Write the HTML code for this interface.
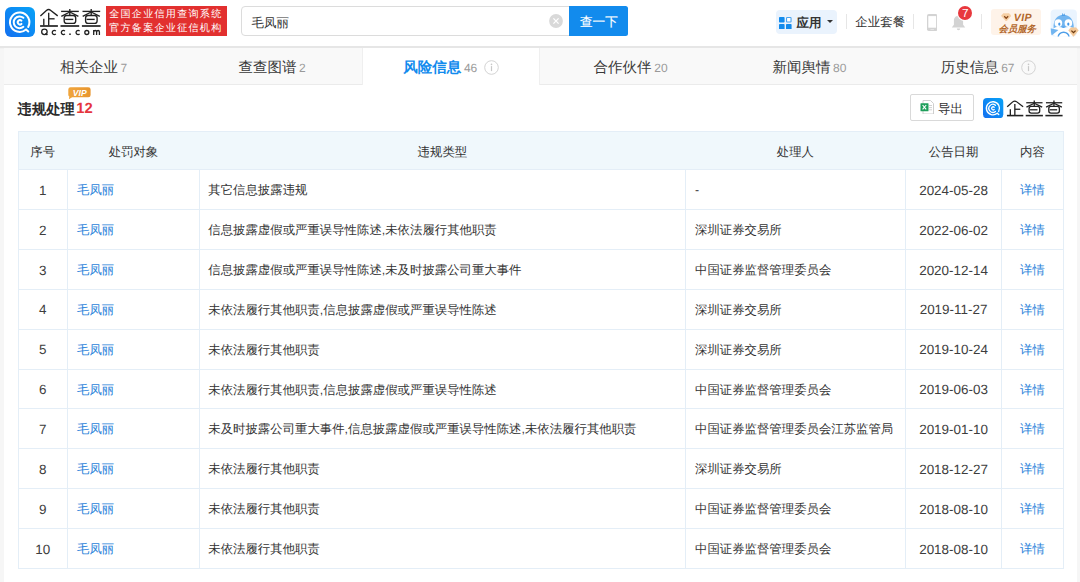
<!DOCTYPE html>
<html><head><meta charset="utf-8">
<style>
*{box-sizing:border-box;margin:0;padding:0}
html,body{text-rendering:geometricPrecision;width:1080px;height:582px;overflow:hidden;background:#f6f6f6;font-family:"Liberation Sans",sans-serif;color:#333}
div,span.ab,svg{position:absolute}
span{white-space:nowrap}
.t{white-space:nowrap;line-height:1}
.hl{height:1px;background:#e4eef7}
.vl{width:1px;background:#e4eef7}
.lk{color:#128bed}
</style></head><body>

<div style="left:0;top:0;width:1080px;height:46.5px;background:#fff"></div>
<div style="left:0;top:46.4px;width:1080px;height:1.2px;background:#e6e6e6"></div>
<div style="left:0;top:47.6px;width:1080px;height:1.5px;background:linear-gradient(#eeeeee,rgba(246,246,246,0))"></div>
<svg style="left:4.5px;top:6.8px" width="30" height="30" viewBox="0 0 30 30">
<defs><linearGradient id="lg" x1="0" y1="1" x2="1" y2="0"><stop offset="0" stop-color="#1470f0"/><stop offset="1" stop-color="#07a2f7"/></linearGradient></defs>
<rect width="30" height="30" rx="6" fill="url(#lg)"/>
<g fill="none" stroke="#fff" stroke-width="2" stroke-linecap="round" stroke-linejoin="round">
<path d="M23.18 19.90 A9.7 9.7 0 1 0 21.06 22.52 M21.06 22.52 L23.26 24.52"/>
<path d="M18.39 10.78 A5.9 5.9 0 1 0 18.39 19.82"/>
<path d="M16.47 13.67 A2.2 2.2 0 1 0 16.47 16.93"/>
</g></svg>
<svg style="left:38px;top:6px" width="66" height="32" viewBox="0 0 66 32">
<g fill="none" stroke="#222" stroke-width="1.35" stroke-linecap="butt" stroke-linejoin="round">
<path d="M2.4 9.9 L8.4 4.4 Q10.6 2.6 12.8 4.4 L19.7 9.9"/>
<path d="M10.7 6.7 V19.4"/><path d="M10.7 12.8 H16.6"/><path d="M5.8 12.8 V19.4"/>
<path d="M2.1 20 H19.9" stroke-width="1.7"/>
<g id="cha">
<path d="M23.1 5.4 H40.8"/><path d="M31.8 2.9 V9.5"/><path d="M31.8 6.0 L23.3 10.3"/><path d="M31.8 6.0 L40.4 10.3"/>
<rect x="26.2" y="9.5" width="11.5" height="7.8" rx="2.4"/><path d="M27.2 13.4 H35.3"/>
<path d="M22.5 20 H41.2" stroke-width="1.7"/>
</g>
<use href="#cha" x="21.4"/>
</g></svg>
<svg style="left:38px;top:26px" width="66" height="12" viewBox="38 26 66 12">
<g fill="none" stroke="#222" stroke-width="1.3">
<circle cx="44.4" cy="31.8" r="2.75"/>
<path d="M45.6 33.2 L47.4 35" stroke-width="1.5"/>
<path d="M55.8 31.1 A2.05 2.05 0 1 0 55.8 33.9"/>
<path d="M64.9 31.1 A2.05 2.05 0 1 0 64.9 33.9"/>
<path d="M79.6 31.1 A2.05 2.05 0 1 0 79.6 33.9"/>
<circle cx="86.8" cy="32.5" r="2.0"/>
<path d="M93.7 35.1 V30.0 M93.7 31.6 Q93.9 30.5 95.3 30.5 Q96.6 30.5 96.6 31.9 V35.1 M96.6 31.9 Q96.8 30.5 98.1 30.5 Q99.4 30.5 99.4 31.9 V35.1"/>
</g>
<circle cx="70" cy="34.2" r="0.85" fill="#222"/>
</svg>
<div style="left:105.6px;top:6.3px;width:121px;height:30.1px;background:#e2302f"></div>
<div class="t" style="left:109.2px;top:10.0px;font-size:10.1px;letter-spacing:1.24px;color:#fff">全国企业信用查询系统</div>
<div class="t" style="left:109.2px;top:23.9px;font-size:10.1px;letter-spacing:1.24px;color:#fff">官方备案企业征信机构</div>
<div style="left:240.6px;top:6.4px;width:340px;height:29.3px;border:1px solid #dcdcdc;border-radius:4px;background:#fff"></div>
<div class="t" style="left:251.5px;top:16.5px;font-size:12.5px;color:#333">毛凤丽</div>
<svg style="left:548.8px;top:13.9px" width="14" height="14" viewBox="0 0 14 14"><circle cx="7" cy="7" r="6.9" fill="#d9d9d9"/><path d="M4.4 4.4L9.6 9.6M9.6 4.4L4.4 9.6" stroke="#fff" stroke-width="1.3"/></svg>
<div style="left:569px;top:6.1px;width:59.3px;height:29.7px;background:#128bed;border-radius:0 2.5px 2.5px 0"></div>
<div class="t" style="left:580px;top:15.9px;font-size:12.6px;color:#fff;-webkit-text-stroke:0.2px #fff">查一下</div>
<div style="left:775.6px;top:9.6px;width:61px;height:24.2px;background:#eaf3fd;border-radius:4px"></div>
<svg style="left:779.3px;top:16.6px" width="12.6" height="12.6" viewBox="0 0 12.6 12.6">
<rect x="0" y="0" width="5.6" height="5.6" rx="0.8" fill="#128bed"/>
<rect x="7.55" y="0.55" width="4.5" height="4.5" rx="0.6" fill="#fff" stroke="#4aa3f0" stroke-width="1.1"/>
<rect x="0" y="7.0" width="5.6" height="5.6" rx="0.8" fill="#128bed"/>
<rect x="7.0" y="7.0" width="5.6" height="5.6" rx="0.8" fill="#128bed"/></svg>
<div class="t" style="left:796.4px;top:16.6px;font-size:12.5px;font-weight:bold;color:#333">应用</div>
<div style="left:826.9px;top:20.4px;width:0;height:0;border-left:3.1px solid transparent;border-right:3.1px solid transparent;border-top:3.4px solid #333"></div>
<div style="left:846.2px;top:14px;width:1px;height:15px;background:#e6e6e6"></div>
<div class="t" style="left:855.2px;top:16.4px;font-size:12.5px;color:#333">企业套餐</div>
<div style="left:913px;top:14px;width:1px;height:15px;background:#e6e6e6"></div>
<svg style="left:926.5px;top:13.7px" width="10.4" height="17" viewBox="0 0 10.4 17"><rect x="0" y="0" width="10.4" height="17" rx="1.8" fill="#d3d3d3"/><rect x="1.3" y="2.1" width="7.8" height="11.6" fill="#fff"/><rect x="3.4" y="14.9" width="3.6" height="0.9" rx="0.4" fill="#ececec"/></svg>
<svg style="left:950.5px;top:15.2px" width="15" height="16" viewBox="0 0 15 16"><path d="M7.5 0.8c-2.9 0-4.6 2.2-4.6 5v3.9L0.8 12.6h13.4l-2.1-2.9V5.8C12.1 3 10.4 0.8 7.5 0.8z" fill="#d3d3d3"/><path d="M5.8 13.6a1.7 1.6 0 0 0 3.4 0z" fill="#d3d3d3"/></svg>
<div style="left:957.9px;top:6.3px;width:14.2px;height:14.2px;border-radius:50%;background:#e8383d;box-shadow:0 0 0 1.2px #fff"></div>
<div class="t" style="left:961.9px;top:8.0px;font-size:11.8px;color:#fff">7</div>
<div style="left:981.3px;top:14px;width:1px;height:15px;background:#e6e6e6"></div>
<div style="left:990.7px;top:9.3px;width:50.6px;height:25.9px;background:#fef3e9;border-radius:3px"></div>
<svg style="left:1000.8px;top:12.5px" width="10.4" height="8.6" viewBox="0 0 10.4 8.6"><path d="M2.4 0.4H8L10.1 2.8L5.2 8.3L0.3 2.8z" fill="#f6cfa3" stroke="#f6cfa3" stroke-width="0.5" stroke-linejoin="round"/><path d="M3.2 3.3l2 2 2-2" stroke="#86461a" stroke-width="1.2" fill="none"/></svg>
<div class="t" style="left:1013.8px;top:12.8px;font-size:10.6px;font-weight:bold;font-style:italic;color:#b3682d;letter-spacing:0.4px">VIP</div>
<div class="t" style="left:998.6px;top:24.1px;font-size:9.4px;font-weight:bold;font-style:italic;color:#b3682d;letter-spacing:-0.1px">会员服务</div>
<svg style="left:1050px;top:8.5px" width="30" height="28" viewBox="1050 8.5 30 28">
<defs><clipPath id="avc"><rect x="1050.6" y="9" width="26.3" height="27" rx="4"/></clipPath></defs>
<rect x="1050.6" y="9" width="26.3" height="27" rx="4" fill="#eaf4fe"/>
<g clip-path="url(#avc)">
<ellipse cx="1063.5" cy="31" rx="10.5" ry="8.5" fill="#fff"/>
<path d="M1053.6 28 C1053.0 19 1057.5 14.2 1063.5 14.2 C1069.5 14.2 1074.2 19 1073.8 28 C1071 26 1067 26.2 1063.5 27.6 C1060 26.2 1056 26 1053.6 28 Z" fill="#72b5f0"/>
<path d="M1061.8 15.5 L1062.6 12.3 L1063.4 14.4 L1064.6 12.8 L1065 15.6z" fill="#4f9fe8"/>
<ellipse cx="1058.4" cy="22.6" rx="3.8" ry="3.9" fill="#fff"/>
<ellipse cx="1068.4" cy="22.6" rx="3.8" ry="3.9" fill="#fff"/>
<ellipse cx="1059.3" cy="23.6" rx="1.1" ry="1.65" fill="#3f97ea"/>
<ellipse cx="1068.3" cy="23.6" rx="1.1" ry="1.65" fill="#3f97ea"/>
<path d="M1062 25.9 H1064.9 A1.45 1.45 0 0 1 1062 25.9z" fill="#4f9fe8"/>
<path d="M1050.3 27.8 L1058.4 29.6 L1051.6 35 Z" fill="#72b5f0"/>
<path d="M1058.2 36.4 A5.4 4.6 0 0 1 1069 36.4" fill="none" stroke="#4f9fe8" stroke-width="1.4"/>
</g>
<path d="M1070.8 27.3H1076.2L1078.3 29.9L1073.5 35.9L1068.7 29.9z" fill="#f4c99a" stroke="#f4c99a" stroke-width="0.6" stroke-linejoin="round"/>
<path d="M1071.4 30.1l2.1 2.1 2.1-2.1" stroke="#6b3a10" stroke-width="1.3" fill="none"/>
</svg>
<div style="left:4px;top:47.6px;width:1073px;height:36.9px;background:#f9f9f9"></div>
<div style="left:4px;top:83.9px;width:1073px;height:1px;background:#ebebeb"></div>
<div class="t" style="left:60.00px;top:60.6px;font-size:14.5px;font-weight:normal;color:#393939">相关企业</div>
<div class="t" style="left:120.60px;top:62.2px;font-size:12px;color:#999">7</div>
<div class="t" style="left:238.60px;top:60.6px;font-size:14.5px;font-weight:normal;color:#393939">查查图谱</div>
<div class="t" style="left:299.00px;top:62.2px;font-size:12px;color:#999">2</div>
<div style="left:361.67px;top:47.6px;width:178.83px;height:37.9px;background:#fff;border-left:1px solid #efefef;border-right:1px solid #efefef"></div>
<div class="t" style="left:403.30px;top:60.6px;font-size:14.5px;font-weight:bold;color:#128bed">风险信息</div>
<div class="t" style="left:463.90px;top:62.2px;font-size:12px;color:#999">46</div>
<svg style="left:483.50px;top:60px" width="15" height="15" viewBox="0 0 15 15"><circle cx="7.5" cy="7.5" r="6.8" fill="none" stroke="#d3d3d3" stroke-width="1"/><circle cx="7.5" cy="4.4" r="0.8" fill="#c8c8c8"/><rect x="6.9" y="6.1" width="1.2" height="5" fill="#c8c8c8"/></svg>
<div class="t" style="left:593.50px;top:60.6px;font-size:14.5px;font-weight:normal;color:#393939">合作伙伴</div>
<div class="t" style="left:654.30px;top:62.2px;font-size:12px;color:#999">20</div>
<div class="t" style="left:772.60px;top:60.6px;font-size:14.5px;font-weight:normal;color:#393939">新闻舆情</div>
<div class="t" style="left:833.10px;top:62.2px;font-size:12px;color:#999">80</div>
<div class="t" style="left:940.70px;top:60.6px;font-size:14.5px;font-weight:normal;color:#393939">历史信息</div>
<div class="t" style="left:1001.20px;top:62.2px;font-size:12px;color:#999">67</div>
<svg style="left:1020.50px;top:60px" width="15" height="15" viewBox="0 0 15 15"><circle cx="7.5" cy="7.5" r="6.8" fill="none" stroke="#d3d3d3" stroke-width="1"/><circle cx="7.5" cy="4.4" r="0.8" fill="#c8c8c8"/><rect x="6.9" y="6.1" width="1.2" height="5" fill="#c8c8c8"/></svg>
<div style="left:4px;top:84.9px;width:1073px;height:500px;background:#fff"></div>
<div class="t" style="left:17.6px;top:103.0px;font-size:14.3px;font-weight:bold;color:#2b2b2b">违规处理</div>
<div class="t" style="left:76.2px;top:102.3px;font-size:14.8px;font-weight:bold;color:#e5353d">12</div>
<svg style="left:68px;top:86.8px" width="23" height="12.5" viewBox="0 0 23 12.5">
<defs><linearGradient id="vg" x1="0" y1="0" x2="1" y2="0"><stop offset="0" stop-color="#f0a53c"/><stop offset="1" stop-color="#e8952e"/></linearGradient></defs>
<path d="M2.5 0.3H20.3A2.3 2.3 0 0 1 22.6 2.6V8A2.3 2.3 0 0 1 20.3 10.3H4.2L0.9 12.2L1.3 9.6A2.3 2.3 0 0 1 0.3 8V2.6A2.3 2.3 0 0 1 2.5 0.3z" fill="url(#vg)"/>
<text x="11.8" y="8.6" font-family="Liberation Sans" font-size="8.6" font-weight="bold" font-style="italic" fill="#fff" text-anchor="middle">VIP</text>
</svg>
<div style="left:909.5px;top:94.2px;width:64.2px;height:27.1px;border:1px solid #d9d9d9;border-radius:2px;background:#fff"></div>
<svg style="left:919.5px;top:99.5px" width="14" height="14.5" viewBox="0 0 14 14.5">
<path d="M3 0.5H10.5L13.5 3.5V14H3z" fill="#fff" stroke="#c9c9c9" stroke-width="0.9"/>
<rect x="9" y="5" width="3" height="0.9" fill="#ccc"/><rect x="9" y="7.2" width="3" height="0.9" fill="#ccc"/><rect x="9" y="9.4" width="3" height="0.9" fill="#ccc"/>
<rect x="0.5" y="3.2" width="8" height="8" rx="0.5" fill="#1e9e5a"/>
<path d="M2.6 5l3.6 4.4M6.2 5l-3.6 4.4" stroke="#fff" stroke-width="1.1"/>
</svg>
<div class="t" style="left:938px;top:103.4px;font-size:12.6px;color:#333">导出</div>
<svg style="left:983.3px;top:97.7px" width="20.3" height="20.3" viewBox="0 0 30 30">
<rect width="30" height="30" rx="6" fill="url(#lg)"/>
<g fill="none" stroke="#fff" stroke-width="2" stroke-linecap="round" stroke-linejoin="round">
<path d="M23.18 19.90 A9.7 9.7 0 1 0 21.06 22.52 M21.06 22.52 L23.26 24.52"/>
<path d="M18.39 10.78 A5.9 5.9 0 1 0 18.39 19.82"/>
<path d="M16.47 13.67 A2.2 2.2 0 1 0 16.47 16.93"/>
</g></svg>
<svg style="left:1005.37px;top:97.68px" width="60.72" height="21.12" viewBox="0 0 66 24" preserveAspectRatio="none">
<g fill="none" stroke="#222" stroke-width="1.45" stroke-linecap="butt" stroke-linejoin="round">
<path d="M2.4 9.9 L8.4 4.4 Q10.6 2.6 12.8 4.4 L19.7 9.9"/>
<path d="M10.7 6.7 V19.4"/><path d="M10.7 12.8 H16.6"/><path d="M5.8 12.8 V19.4"/>
<path d="M2.1 20 H19.9" stroke-width="1.8"/>
<g id="cha2">
<path d="M23.1 5.4 H40.8"/><path d="M31.8 2.9 V9.5"/><path d="M31.8 6.0 L23.3 10.3"/><path d="M31.8 6.0 L40.4 10.3"/>
<rect x="26.2" y="9.5" width="11.5" height="7.8" rx="2.4"/><path d="M27.2 13.4 H35.3"/>
<path d="M22.5 20 H41.2" stroke-width="1.8"/>
</g>
<use href="#cha2" x="21.4"/>
</g></svg>
<div style="left:18px;top:131.5px;width:1045.3px;height:38.3px;background:#f0f8fc"></div>
<div class="hl" style="left:18px;top:131.0px;width:1045.8px"></div>
<div class="hl" style="left:18px;top:169.3px;width:1045.8px"></div>
<div class="hl" style="left:18px;top:209.16px;width:1045.8px"></div>
<div class="hl" style="left:18px;top:249.02px;width:1045.8px"></div>
<div class="hl" style="left:18px;top:288.88px;width:1045.8px"></div>
<div class="hl" style="left:18px;top:328.74px;width:1045.8px"></div>
<div class="hl" style="left:18px;top:368.60px;width:1045.8px"></div>
<div class="hl" style="left:18px;top:408.46px;width:1045.8px"></div>
<div class="hl" style="left:18px;top:448.32px;width:1045.8px"></div>
<div class="hl" style="left:18px;top:488.18px;width:1045.8px"></div>
<div class="hl" style="left:18px;top:528.04px;width:1045.8px"></div>
<div class="hl" style="left:18px;top:567.90px;width:1045.8px"></div>
<div class="vl" style="left:17.50px;top:131.00px;height:437.90px"></div>
<div class="vl" style="left:66.90px;top:169.30px;height:399.60px"></div>
<div class="vl" style="left:198.90px;top:169.30px;height:399.60px"></div>
<div class="vl" style="left:684.90px;top:169.30px;height:399.60px"></div>
<div class="vl" style="left:904.90px;top:169.30px;height:399.60px"></div>
<div class="vl" style="left:1001.20px;top:169.30px;height:399.60px"></div>
<div class="vl" style="left:1062.80px;top:131.00px;height:437.90px"></div>
<div class="t" style="left:-257.30px;width:600px;text-align:center;top:145.85px;font-size:12.4px;color:#333">序号</div>
<div class="t" style="left:-166.60px;width:600px;text-align:center;top:145.85px;font-size:12.4px;color:#333">处罚对象</div>
<div class="t" style="left:142.40px;width:600px;text-align:center;top:145.85px;font-size:12.4px;color:#333">违规类型</div>
<div class="t" style="left:495.40px;width:600px;text-align:center;top:145.85px;font-size:12.4px;color:#333">处理人</div>
<div class="t" style="left:653.55px;width:600px;text-align:center;top:145.85px;font-size:12.4px;color:#333">公告日期</div>
<div class="t" style="left:732.50px;width:600px;text-align:center;top:145.85px;font-size:12.4px;color:#333">内容</div>
<div class="t" style="left:-257.30px;width:600px;text-align:center;top:183.81px;font-size:13.45px;color:#3d3d3d">1</div>
<div class="t" style="left:77.00px;top:184.33px;font-size:12.4px;color:#2b83da">毛凤丽</div>
<div class="t" style="left:208.30px;top:184.33px;font-size:12.4px;color:#333">其它信息披露违规</div>
<div class="t" style="left:695.00px;top:184.33px;font-size:12.4px;color:#333">-</div>
<div class="t" style="left:653.55px;width:600px;text-align:center;top:183.81px;font-size:13.45px;color:#3d3d3d">2024-05-28</div>
<div class="t" style="left:732.50px;width:600px;text-align:center;top:184.33px;font-size:12.4px;color:#2b83da">详情</div>
<div class="t" style="left:-257.30px;width:600px;text-align:center;top:223.67px;font-size:13.45px;color:#3d3d3d">2</div>
<div class="t" style="left:77.00px;top:224.19px;font-size:12.4px;color:#2b83da">毛凤丽</div>
<div class="t" style="left:208.30px;top:224.19px;font-size:12.4px;color:#333">信息披露虚假或严重误导性陈述,未依法履行其他职责</div>
<div class="t" style="left:695.00px;top:224.19px;font-size:12.4px;color:#333">深圳证券交易所</div>
<div class="t" style="left:653.55px;width:600px;text-align:center;top:223.67px;font-size:13.45px;color:#3d3d3d">2022-06-02</div>
<div class="t" style="left:732.50px;width:600px;text-align:center;top:224.19px;font-size:12.4px;color:#2b83da">详情</div>
<div class="t" style="left:-257.30px;width:600px;text-align:center;top:263.53px;font-size:13.45px;color:#3d3d3d">3</div>
<div class="t" style="left:77.00px;top:264.05px;font-size:12.4px;color:#2b83da">毛凤丽</div>
<div class="t" style="left:208.30px;top:264.05px;font-size:12.4px;color:#333">信息披露虚假或严重误导性陈述,未及时披露公司重大事件</div>
<div class="t" style="left:695.00px;top:264.05px;font-size:12.4px;color:#333">中国证券监督管理委员会</div>
<div class="t" style="left:653.55px;width:600px;text-align:center;top:263.53px;font-size:13.45px;color:#3d3d3d">2020-12-14</div>
<div class="t" style="left:732.50px;width:600px;text-align:center;top:264.05px;font-size:12.4px;color:#2b83da">详情</div>
<div class="t" style="left:-257.30px;width:600px;text-align:center;top:303.38px;font-size:13.45px;color:#3d3d3d">4</div>
<div class="t" style="left:77.00px;top:303.91px;font-size:12.4px;color:#2b83da">毛凤丽</div>
<div class="t" style="left:208.30px;top:303.91px;font-size:12.4px;color:#333">未依法履行其他职责,信息披露虚假或严重误导性陈述</div>
<div class="t" style="left:695.00px;top:303.91px;font-size:12.4px;color:#333">深圳证券交易所</div>
<div class="t" style="left:653.55px;width:600px;text-align:center;top:303.38px;font-size:13.45px;color:#3d3d3d">2019-11-27</div>
<div class="t" style="left:732.50px;width:600px;text-align:center;top:303.91px;font-size:12.4px;color:#2b83da">详情</div>
<div class="t" style="left:-257.30px;width:600px;text-align:center;top:343.25px;font-size:13.45px;color:#3d3d3d">5</div>
<div class="t" style="left:77.00px;top:343.77px;font-size:12.4px;color:#2b83da">毛凤丽</div>
<div class="t" style="left:208.30px;top:343.77px;font-size:12.4px;color:#333">未依法履行其他职责</div>
<div class="t" style="left:695.00px;top:343.77px;font-size:12.4px;color:#333">深圳证券交易所</div>
<div class="t" style="left:653.55px;width:600px;text-align:center;top:343.25px;font-size:13.45px;color:#3d3d3d">2019-10-24</div>
<div class="t" style="left:732.50px;width:600px;text-align:center;top:343.77px;font-size:12.4px;color:#2b83da">详情</div>
<div class="t" style="left:-257.30px;width:600px;text-align:center;top:383.10px;font-size:13.45px;color:#3d3d3d">6</div>
<div class="t" style="left:77.00px;top:383.63px;font-size:12.4px;color:#2b83da">毛凤丽</div>
<div class="t" style="left:208.30px;top:383.63px;font-size:12.4px;color:#333">未依法履行其他职责,信息披露虚假或严重误导性陈述</div>
<div class="t" style="left:695.00px;top:383.63px;font-size:12.4px;color:#333">中国证券监督管理委员会</div>
<div class="t" style="left:653.55px;width:600px;text-align:center;top:383.10px;font-size:13.45px;color:#3d3d3d">2019-06-03</div>
<div class="t" style="left:732.50px;width:600px;text-align:center;top:383.63px;font-size:12.4px;color:#2b83da">详情</div>
<div class="t" style="left:-257.30px;width:600px;text-align:center;top:422.96px;font-size:13.45px;color:#3d3d3d">7</div>
<div class="t" style="left:77.00px;top:423.49px;font-size:12.4px;color:#2b83da">毛凤丽</div>
<div class="t" style="left:208.30px;top:423.49px;font-size:12.4px;color:#333">未及时披露公司重大事件,信息披露虚假或严重误导性陈述,未依法履行其他职责</div>
<div class="t" style="left:695.00px;top:423.49px;font-size:12.4px;color:#333">中国证券监督管理委员会江苏监管局</div>
<div class="t" style="left:653.55px;width:600px;text-align:center;top:422.96px;font-size:13.45px;color:#3d3d3d">2019-01-10</div>
<div class="t" style="left:732.50px;width:600px;text-align:center;top:423.49px;font-size:12.4px;color:#2b83da">详情</div>
<div class="t" style="left:-257.30px;width:600px;text-align:center;top:462.82px;font-size:13.45px;color:#3d3d3d">8</div>
<div class="t" style="left:77.00px;top:463.35px;font-size:12.4px;color:#2b83da">毛凤丽</div>
<div class="t" style="left:208.30px;top:463.35px;font-size:12.4px;color:#333">未依法履行其他职责</div>
<div class="t" style="left:695.00px;top:463.35px;font-size:12.4px;color:#333">深圳证券交易所</div>
<div class="t" style="left:653.55px;width:600px;text-align:center;top:462.82px;font-size:13.45px;color:#3d3d3d">2018-12-27</div>
<div class="t" style="left:732.50px;width:600px;text-align:center;top:463.35px;font-size:12.4px;color:#2b83da">详情</div>
<div class="t" style="left:-257.30px;width:600px;text-align:center;top:502.69px;font-size:13.45px;color:#3d3d3d">9</div>
<div class="t" style="left:77.00px;top:503.21px;font-size:12.4px;color:#2b83da">毛凤丽</div>
<div class="t" style="left:208.30px;top:503.21px;font-size:12.4px;color:#333">未依法履行其他职责</div>
<div class="t" style="left:695.00px;top:503.21px;font-size:12.4px;color:#333">中国证券监督管理委员会</div>
<div class="t" style="left:653.55px;width:600px;text-align:center;top:502.69px;font-size:13.45px;color:#3d3d3d">2018-08-10</div>
<div class="t" style="left:732.50px;width:600px;text-align:center;top:503.21px;font-size:12.4px;color:#2b83da">详情</div>
<div class="t" style="left:-257.30px;width:600px;text-align:center;top:542.54px;font-size:13.45px;color:#3d3d3d">10</div>
<div class="t" style="left:77.00px;top:543.07px;font-size:12.4px;color:#2b83da">毛凤丽</div>
<div class="t" style="left:208.30px;top:543.07px;font-size:12.4px;color:#333">未依法履行其他职责</div>
<div class="t" style="left:695.00px;top:543.07px;font-size:12.4px;color:#333">中国证券监督管理委员会</div>
<div class="t" style="left:653.55px;width:600px;text-align:center;top:542.54px;font-size:13.45px;color:#3d3d3d">2018-08-10</div>
<div class="t" style="left:732.50px;width:600px;text-align:center;top:543.07px;font-size:12.4px;color:#2b83da">详情</div>
</body></html>
